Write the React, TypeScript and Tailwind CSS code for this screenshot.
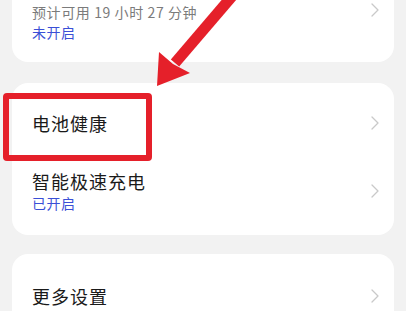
import { ReactNode } from 'react';

const cjk = { fontFamily: '"Noto Sans CJK SC", "Noto Sans", sans-serif' };

function Chevron() {
  return (
    <svg width="10" height="16" viewBox="0 0 10 16" className="shrink-0">
      <polyline points="2,2 8,8 2,14" fill="none" stroke="#c9c9c9" strokeWidth="1.3" strokeLinecap="round" strokeLinejoin="round" />
    </svg>
  );
}

function Card({ children, className = '' }: { children: ReactNode; className?: string }) {
  return <div className={`bg-white rounded-2xl ${className}`}>{children}</div>;
}

export default function App() {
  return (
    <div
      className="relative w-[406px] h-[311px] overflow-hidden bg-[#f2f2f2] px-3 flex flex-col"
      style={cjk}
    >
      {/* 上一张卡片（顶部被裁掉） */}
      <Card className="h-[62px] shrink-0 rounded-t-none flex justify-between pl-5 pr-[14px] pt-[2px]">
        <div className="flex flex-col">
          <span className="text-[14px] leading-[20px] tracking-[0.6px] text-[#7b7b7b]">预计可用 19 小时 27 分钟</span>
          <span className="text-[14px] leading-[20px] tracking-[0.5px] text-[#3a4fd6]">未开启</span>
        </div>
        <Chevron />
      </Card>

      <Card className="mt-[21px] shrink-0 flex flex-col">
        <div className="h-[80px] flex items-center justify-between pl-5 pr-[14px]">
          <span className="text-[18px] leading-[24px] tracking-[1px] text-[#1a1a1a]">电池健康</span>
          <Chevron />
        </div>
        <div className="flex items-center justify-between pl-5 pr-[14px] pt-[6px] pb-[22px]">
          <div className="flex flex-col">
            <span className="text-[18px] leading-[24px] tracking-[1px] text-[#1a1a1a]">智能极速充电</span>
            <span className="text-[14px] leading-[20px] tracking-[0.5px] text-[#3a4fd6]">已开启</span>
          </div>
          <Chevron />
        </div>
      </Card>

      <Card className="mt-[19px] shrink-0">
        <div className="h-[84px] flex items-center justify-between pl-5 pr-[14px]">
          <span className="text-[18px] leading-[24px] tracking-[1px] text-[#1a1a1a]">更多设置</span>
          <Chevron />
        </div>
      </Card>

      {/* 标注：红框 */}
      <div className="absolute left-[3px] top-[93px] w-[149px] h-[68px] border-[6px] border-[#e5202a] rounded-[4px]" />

      {/* 标注：箭头 */}
      <svg className="absolute left-0 top-0 pointer-events-none" width="406" height="311" viewBox="0 0 406 311">
        <line x1="234" y1="-6" x2="175" y2="63" stroke="#e5202a" strokeWidth="11" />
        <polygon points="157,86 159,52 173,64 190,73" fill="#e5202a" />
      </svg>
    </div>
  );
}
